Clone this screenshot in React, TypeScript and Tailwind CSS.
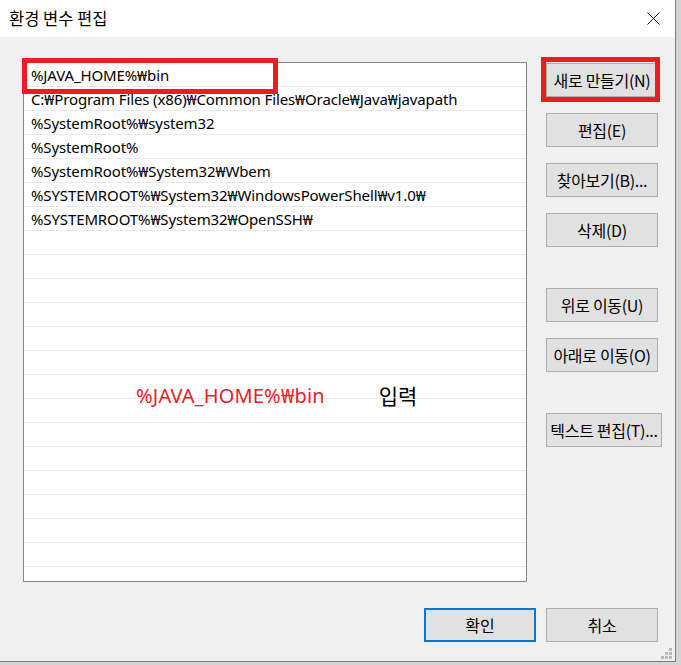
import React from 'react';

const paths = [
  '%JAVA_HOME%₩bin',
  'C:₩Program Files (x86)₩Common Files₩Oracle₩Java₩javapath',
  '%SystemRoot%₩system32',
  '%SystemRoot%',
  '%SystemRoot%₩System32₩Wbem',
  '%SYSTEMROOT%₩System32₩WindowsPowerShell₩v1.0₩',
  '%SYSTEMROOT%₩System32₩OpenSSH₩',
];

const TOTAL_ROWS = 22;

const Btn = ({ label, className = '' }: { label: string; className?: string }) => (
  <button
    className={`h-[34px] bg-[#e1e1e1] border border-[#adadad] text-[16px] text-black flex items-center justify-center whitespace-nowrap tracking-[-0.3px] ${className}`}
  >
    {label}
  </button>
);

const SizeGrip = () => (
  <svg width="12" height="12" viewBox="0 0 12 12" className="absolute right-[3px] bottom-[1px]">
    <rect x="9" y="0" width="3" height="3" fill="#b9b9b9" />
    <rect x="5" y="4" width="3" height="3" fill="#b9b9b9" />
    <rect x="9" y="4" width="3" height="3" fill="#b9b9b9" />
    <rect x="1" y="8" width="3" height="3" fill="#b9b9b9" />
    <rect x="5" y="8" width="3" height="3" fill="#b9b9b9" />
    <rect x="9" y="8" width="3" height="3" fill="#b9b9b9" />
  </svg>
);

export default function App() {
  const rows = Array.from({ length: TOTAL_ROWS }, (_, i) => paths[i] ?? '');

  return (
    <div
      className="w-[681px] h-[665px] bg-[#d4d4d4] overflow-hidden"
      style={{ fontFamily: '"Noto Sans", "Noto Sans CJK KR", sans-serif' }}
    >
      <div className="relative w-[676px] h-[662px] bg-[#f0f0f0] border-r border-b border-[#7b7b7b] flex flex-col">
        {/* title bar */}
        <div className="h-[37px] shrink-0 bg-white flex items-center justify-between pl-[9px] pr-[15px]">
          <span className="text-[16.5px] text-black" style={{ fontFamily: '"Noto Sans CJK KR", sans-serif' }}>
            환경 변수 편집
          </span>
          <svg width="13" height="13" viewBox="0 0 13 13">
            <path d="M0.5 0.5 L12.5 12.5 M12.5 0.5 L0.5 12.5" stroke="#111" strokeWidth="1" />
          </svg>
        </div>

        <div className="flex pt-[25px] pl-[23px]">
          {/* list box */}
          <div className="relative w-[504px] h-[520px] bg-white border border-[#828790] overflow-hidden">
            {rows.map((p, i) => (
              <div
                key={i}
                className="h-[24px] border-b border-[#eaeaea] pl-[7px] pt-[2px] flex items-center text-[15px] tracking-[-0.12px] text-black whitespace-nowrap leading-none"
              >
                {p}
              </div>
            ))}

            {/* annotation */}
            <div className="absolute left-[112px] top-[322px] flex items-center gap-[54px] text-[20px] leading-none">
              <span className="text-[#e8202a] tracking-[0.15px]">%JAVA_HOME%₩bin</span>
              <span className="text-black text-[21px]" style={{ fontFamily: '"Noto Sans CJK KR", sans-serif' }}>입력</span>
            </div>
          </div>

          {/* buttons */}
          <div className="flex flex-col pl-[19px] pt-[1px]" style={{ fontFamily: '"Noto Sans CJK KR", sans-serif' }}>
            <Btn label="새로 만들기(N)" className="w-[112px]" />
            <Btn label="편집(E)" className="w-[112px] mt-[16px]" />
            <Btn label="찾아보기(B)..." className="w-[112px] mt-[16px]" />
            <Btn label="삭제(D)" className="w-[112px] mt-[16px]" />
            <Btn label="위로 이동(U)" className="w-[112px] mt-[41px]" />
            <Btn label="아래로 이동(O)" className="w-[112px] mt-[16px]" />
            <Btn label="텍스트 편집(T)..." className="w-[116px] mt-[41px]" />
          </div>
        </div>

        {/* footer */}
        <div className="flex gap-[10px] pl-[424px] mt-[26px]" style={{ fontFamily: '"Noto Sans CJK KR", sans-serif' }}>
          <button className="w-[112px] h-[34px] bg-[#e1e1e1] border-2 border-[#0078d7] text-[16px] text-black flex items-center justify-center">
            확인
          </button>
          <Btn label="취소" className="w-[112px]" />
        </div>

        {/* red highlight overlays */}
        <div className="absolute left-[22px] top-[58px] w-[256px] h-[36px] border-[5px] border-[#ec1c24]" />
        <div className="absolute left-[541px] top-[57px] w-[119px] h-[45px] border-[5px] border-[#ec1c24]" />

        <SizeGrip />
      </div>
    </div>
  );
}
